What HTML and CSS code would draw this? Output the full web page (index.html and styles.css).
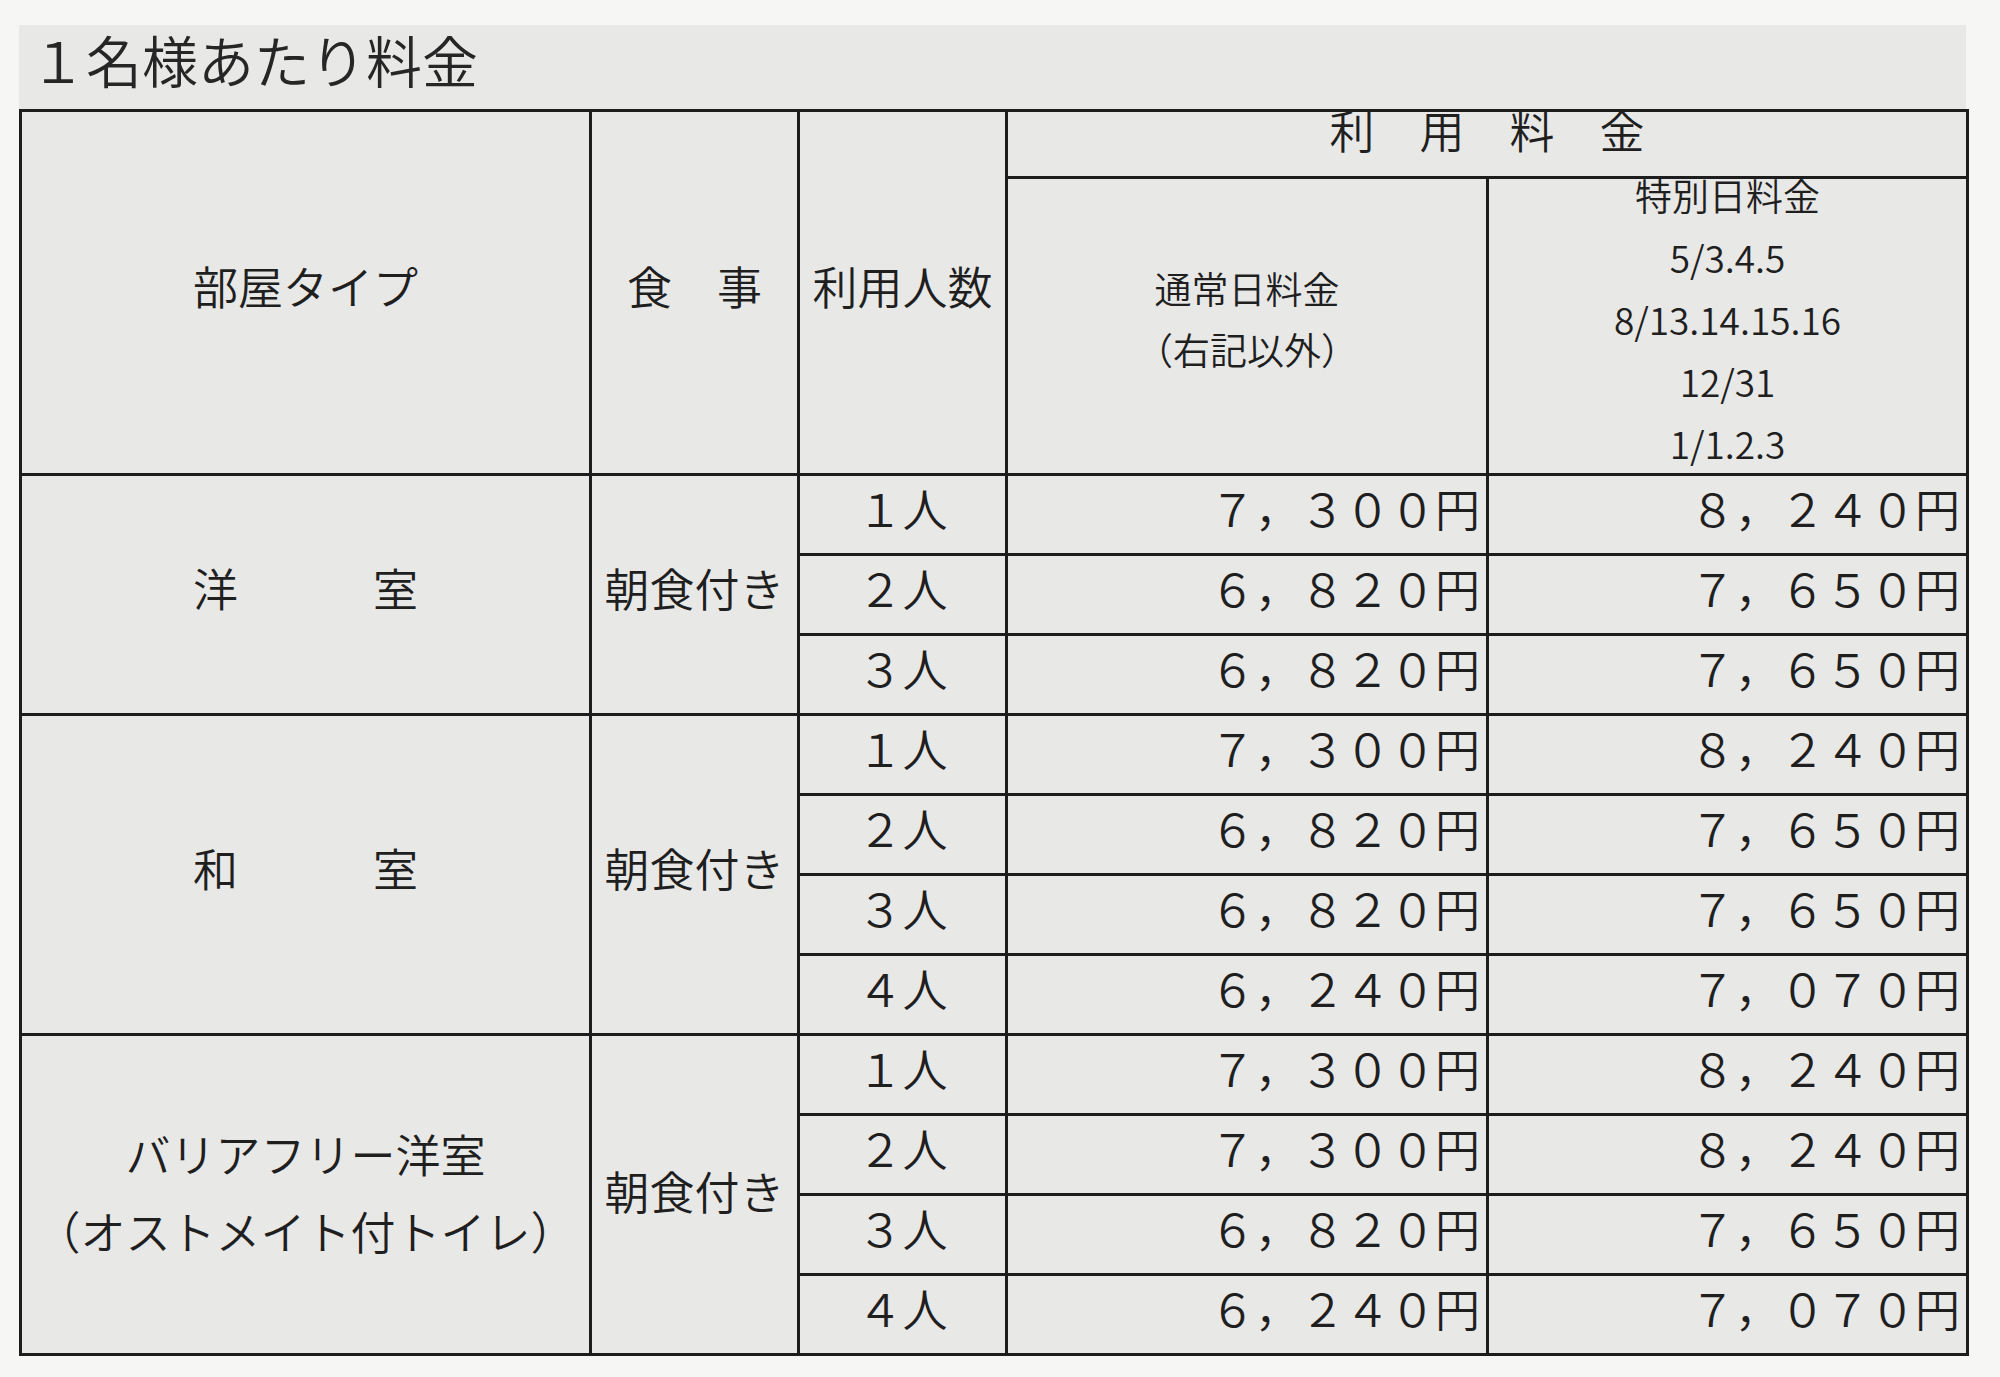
FILE: index.html
```html
<!DOCTYPE html>
<html lang="ja">
<head>
<meta charset="utf-8">
<title>1名様あたり料金</title>
<link rel="stylesheet" href="styles.css">
</head>
<body>
<div class="sheet">
  <h1 class="title">１名様あたり料金</h1>
  <table class="rates">
    <colgroup>
      <col class="c-type">
      <col class="c-meal">
      <col class="c-num">
      <col class="c-normal">
      <col class="c-special">
    </colgroup>
    <thead>
      <tr class="hrow1">
        <th rowspan="2" class="hd">部屋タイプ</th>
        <th rowspan="2" class="hd">食　事</th>
        <th rowspan="2" class="hd">利用人数</th>
        <th colspan="2" class="hd-fee">利　用　料　金</th>
      </tr>
      <tr class="hrow2">
        <th class="hd-normal">通常日料金<br>（右記以外）</th>
        <th class="hd-special"><div class="dates">特別日料金<br>5/3.4.5<br>8/13.14.15.16<br>12/31<br>1/1.2.3</div></th>
      </tr>
    </thead>
    <tbody>
      <tr>
        <td rowspan="3" class="type">洋　　　室</td>
        <td rowspan="3" class="meal">朝食付き</td>
        <td class="num">１人</td><td class="price">７，３００円</td><td class="price">８，２４０円</td>
      </tr>
      <tr><td class="num">２人</td><td class="price">６，８２０円</td><td class="price">７，６５０円</td></tr>
      <tr><td class="num">３人</td><td class="price">６，８２０円</td><td class="price">７，６５０円</td></tr>
      <tr>
        <td rowspan="4" class="type">和　　　室</td>
        <td rowspan="4" class="meal">朝食付き</td>
        <td class="num">１人</td><td class="price">７，３００円</td><td class="price">８，２４０円</td>
      </tr>
      <tr><td class="num">２人</td><td class="price">６，８２０円</td><td class="price">７，６５０円</td></tr>
      <tr><td class="num">３人</td><td class="price">６，８２０円</td><td class="price">７，６５０円</td></tr>
      <tr><td class="num">４人</td><td class="price">６，２４０円</td><td class="price">７，０７０円</td></tr>
      <tr>
        <td rowspan="4" class="type type-2line">バリアフリー洋室<br>（オストメイト付トイレ）</td>
        <td rowspan="4" class="meal meal-low">朝食付き</td>
        <td class="num">１人</td><td class="price">７，３００円</td><td class="price">８，２４０円</td>
      </tr>
      <tr><td class="num">２人</td><td class="price">７，３００円</td><td class="price">８，２４０円</td></tr>
      <tr><td class="num">３人</td><td class="price">６，８２０円</td><td class="price">７，６５０円</td></tr>
      <tr><td class="num">４人</td><td class="price">６，２４０円</td><td class="price">７，０７０円</td></tr>
    </tbody>
  </table>
</div>
</body>
</html>
```

FILE: styles.css
```css
html, body {
  margin: 0;
  padding: 0;
}

body {
  background: #f6f6f5;
  color: #1f1f1f;
  font-family: "Noto Sans CJK JP", "Noto Sans", sans-serif;
  font-weight: 350;
}

.sheet {
  margin: 25px 0 0 19px;
  width: 1947px;
  background: #e8e8e7;
}

.title {
  margin: 0;
  padding: 6px 0 22px 11px;
  font-size: 56px;
  line-height: 56px;
  font-weight: 350;
  color: #262626;
}

.rates {
  width: 1947px;
  table-layout: fixed;
  border-collapse: collapse;
  border: 3px solid #1d1d1d;
}

.c-type { width: 570px; }
.c-meal { width: 208px; }
.c-num { width: 208px; }
.c-normal { width: 481px; }
.c-special { width: 480px; }

.rates th,
.rates td {
  border: 3px solid #1d1d1d;
  padding: 0;
  font-weight: 350;
  text-align: center;
  vertical-align: middle;
  white-space: nowrap;
}

.hrow1 { height: 67px; }
.hrow2 { height: 297px; }
.rates tbody tr { height: 80px; }

.rates .hd {
  font-size: 45px;
  line-height: 45px;
  padding-bottom: 15px;
}

.rates .hd-fee {
  font-size: 45px;
  line-height: 30px;
  vertical-align: top;
  padding-top: 3px;
}

.rates .hd-normal {
  font-size: 37px;
  line-height: 61px;
  padding-bottom: 14px;
}

.rates .hd-special {
  font-size: 37px;
  padding-bottom: 15px;
}

.dates {
  line-height: 62px;
  margin: -20px 0;
}

.rates .type,
.rates .meal {
  font-size: 45px;
  line-height: 45px;
  padding-bottom: 15px;
}

.rates .meal-low {
  padding-bottom: 9px;
}

.rates .num {
  font-size: 45px;
  line-height: 45px;
  padding-bottom: 15px;
}

.rates .type-2line {
  line-height: 77px;
  padding-bottom: 5px;
}

.rates .price {
  font-size: 45px;
  line-height: 45px;
  text-align: right;
  padding: 0 6px 15px 0;
}
```
